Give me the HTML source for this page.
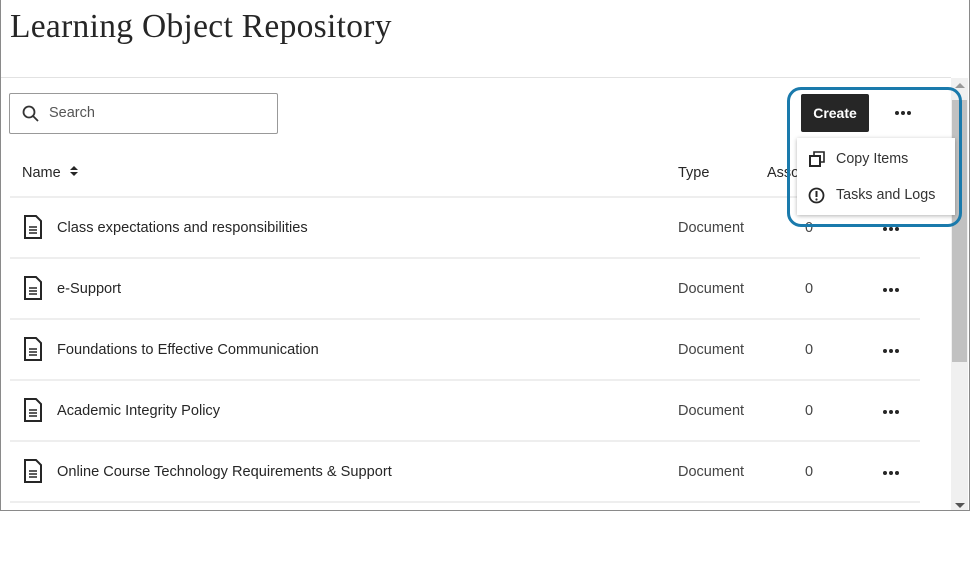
<!DOCTYPE html>
<html><head><style>
body{margin:0;width:970px;height:512px;overflow:hidden;background:#fff;font-family:"Liberation Sans",sans-serif;color:#262626}
.frame{position:absolute;left:0;top:0;width:968px;height:510px;border:1px solid #8a8a8a;border-top:none}
h1{position:absolute;left:10px;top:8px;margin:0;font-family:"Liberation Serif",serif;font-weight:normal;font-size:33.5px;color:#262626;letter-spacing:0.3px}
.sep{position:absolute;left:1px;top:77px;width:950px;height:1px;background:#e2e2e2}
.search{position:absolute;left:9px;top:93px;width:267px;height:39px;border:1px solid #999;border-radius:2px}
.search span{position:absolute;left:39px;top:11px;font-size:14.5px;color:#555}
.th{position:absolute;top:165px;font-size:14.5px;color:#262626}
.row{position:absolute;left:10px;width:910px;height:61px;border-top:2px solid #eee}
.row .n{position:absolute;left:47px;top:22px;font-size:14.6px;color:#262626}
.row .t{position:absolute;left:668px;top:22px;font-size:14.5px;color:#444}
.row .z{position:absolute;left:795px;top:22px;font-size:14.5px;color:#444}
.dots{position:absolute;width:18px;height:4px}
.dots i{position:absolute;top:0;width:4px;height:4px;border-radius:50%;background:#262626}
.row .dots{left:873px;top:29px}
.row svg{position:absolute;left:13px;top:17px}
.sb{position:absolute;left:951px;top:78px;width:17px;height:432px;background:#f0f0f0}
.thumb{position:absolute;left:952px;top:100px;width:15px;height:262px;background:#c1c1c1}
.create{position:absolute;left:801px;top:94px;width:68px;height:38px;background:#262626;color:#fff;font-size:14px;font-weight:bold;text-align:center;line-height:38px;border-radius:2px}
.menu{position:absolute;left:797px;top:138px;width:158px;height:77px;background:#fff;box-shadow:0 1px 4px rgba(0,0,0,.3)}
.menu div{position:absolute;left:39px;font-size:14.3px;color:#333}
.ring{position:absolute;left:787px;top:87px;width:175px;height:140px;border:3px solid #1a7aac;border-radius:14px;box-sizing:border-box}
</style></head><body>
<div class="frame"></div>
<h1>Learning Object Repository</h1>
<div class="sep"></div>
<div class="search"><svg width="18" height="18" style="position:absolute;left:12px;top:11px" viewBox="0 0 18 18"><circle cx="7" cy="7" r="5.5" fill="none" stroke="#333" stroke-width="1.8"/><path d="M11 11l5 5" stroke="#333" stroke-width="1.8"/></svg><span>Search</span></div>
<div class="th" style="left:22px">Name <svg width="10" height="12" viewBox="0 0 10 12" style="margin-left:4px"><path d="M1 5L5 1L9 5z M1 7L5 11L9 7z" fill="#262626"/></svg></div>
<div class="th" style="left:678px">Type</div>
<div class="th" style="left:767px">Asso</div>
<div class="row" style="top:196px"><svg width="20" height="24" viewBox="0 0 20 24"><path d="M2 1h11l5 5v17H2z" fill="none" stroke="#262626" stroke-width="2"/><path d="M6 12h8M6 15h8M6 18h8" stroke="#262626" stroke-width="1.6"/></svg><span class="n">Class expectations and responsibilities</span><span class="t">Document</span><span class="z">0</span><span class="dots"><i style="left:0"></i><i style="left:6px"></i><i style="left:12px"></i></span></div>
<div class="row" style="top:257px"><svg width="20" height="24" viewBox="0 0 20 24"><path d="M2 1h11l5 5v17H2z" fill="none" stroke="#262626" stroke-width="2"/><path d="M6 12h8M6 15h8M6 18h8" stroke="#262626" stroke-width="1.6"/></svg><span class="n">e-Support</span><span class="t">Document</span><span class="z">0</span><span class="dots"><i style="left:0"></i><i style="left:6px"></i><i style="left:12px"></i></span></div>
<div class="row" style="top:318px"><svg width="20" height="24" viewBox="0 0 20 24"><path d="M2 1h11l5 5v17H2z" fill="none" stroke="#262626" stroke-width="2"/><path d="M6 12h8M6 15h8M6 18h8" stroke="#262626" stroke-width="1.6"/></svg><span class="n">Foundations to Effective Communication</span><span class="t">Document</span><span class="z">0</span><span class="dots"><i style="left:0"></i><i style="left:6px"></i><i style="left:12px"></i></span></div>
<div class="row" style="top:379px"><svg width="20" height="24" viewBox="0 0 20 24"><path d="M2 1h11l5 5v17H2z" fill="none" stroke="#262626" stroke-width="2"/><path d="M6 12h8M6 15h8M6 18h8" stroke="#262626" stroke-width="1.6"/></svg><span class="n">Academic Integrity Policy</span><span class="t">Document</span><span class="z">0</span><span class="dots"><i style="left:0"></i><i style="left:6px"></i><i style="left:12px"></i></span></div>
<div class="row" style="top:440px"><svg width="20" height="24" viewBox="0 0 20 24"><path d="M2 1h11l5 5v17H2z" fill="none" stroke="#262626" stroke-width="2"/><path d="M6 12h8M6 15h8M6 18h8" stroke="#262626" stroke-width="1.6"/></svg><span class="n">Online Course Technology Requirements &amp; Support</span><span class="t">Document</span><span class="z">0</span><span class="dots"><i style="left:0"></i><i style="left:6px"></i><i style="left:12px"></i></span></div>
<div class="row" style="top:501px"></div>
<div class="sb"></div><div class="thumb"></div>
<div style="position:absolute;left:955px;top:83px;width:0;height:0;border:5px solid transparent;border-bottom-color:#999;border-top:none"></div>
<div style="position:absolute;left:955px;top:503px;width:0;height:0;border:5px solid transparent;border-top-color:#555;border-bottom:none"></div>
<div class="create">Create</div>
<span class="dots" style="left:895px;top:111px"><i style="left:0"></i><i style="left:6px"></i><i style="left:12px"></i></span>
<div class="menu">
<svg width="16" height="16" style="position:absolute;left:12px;top:13px" viewBox="0 0 16 16"><rect x="1" y="5" width="10" height="10" fill="none" stroke="#262626" stroke-width="2"/><path d="M5 5V1h10v10h-4" fill="none" stroke="#262626" stroke-width="1.6"/></svg>
<div style="top:13px">Copy Items</div>
<svg width="17" height="17" style="position:absolute;left:11px;top:49px" viewBox="0 0 17 17"><circle cx="8.5" cy="8.5" r="7" fill="none" stroke="#262626" stroke-width="1.8"/><path d="M8.5 4v6" stroke="#262626" stroke-width="2"/><circle cx="8.5" cy="12.5" r="1.1" fill="#262626"/></svg>
<div style="top:49px">Tasks and Logs</div>
</div>
<div class="ring"></div>
</body></html>
